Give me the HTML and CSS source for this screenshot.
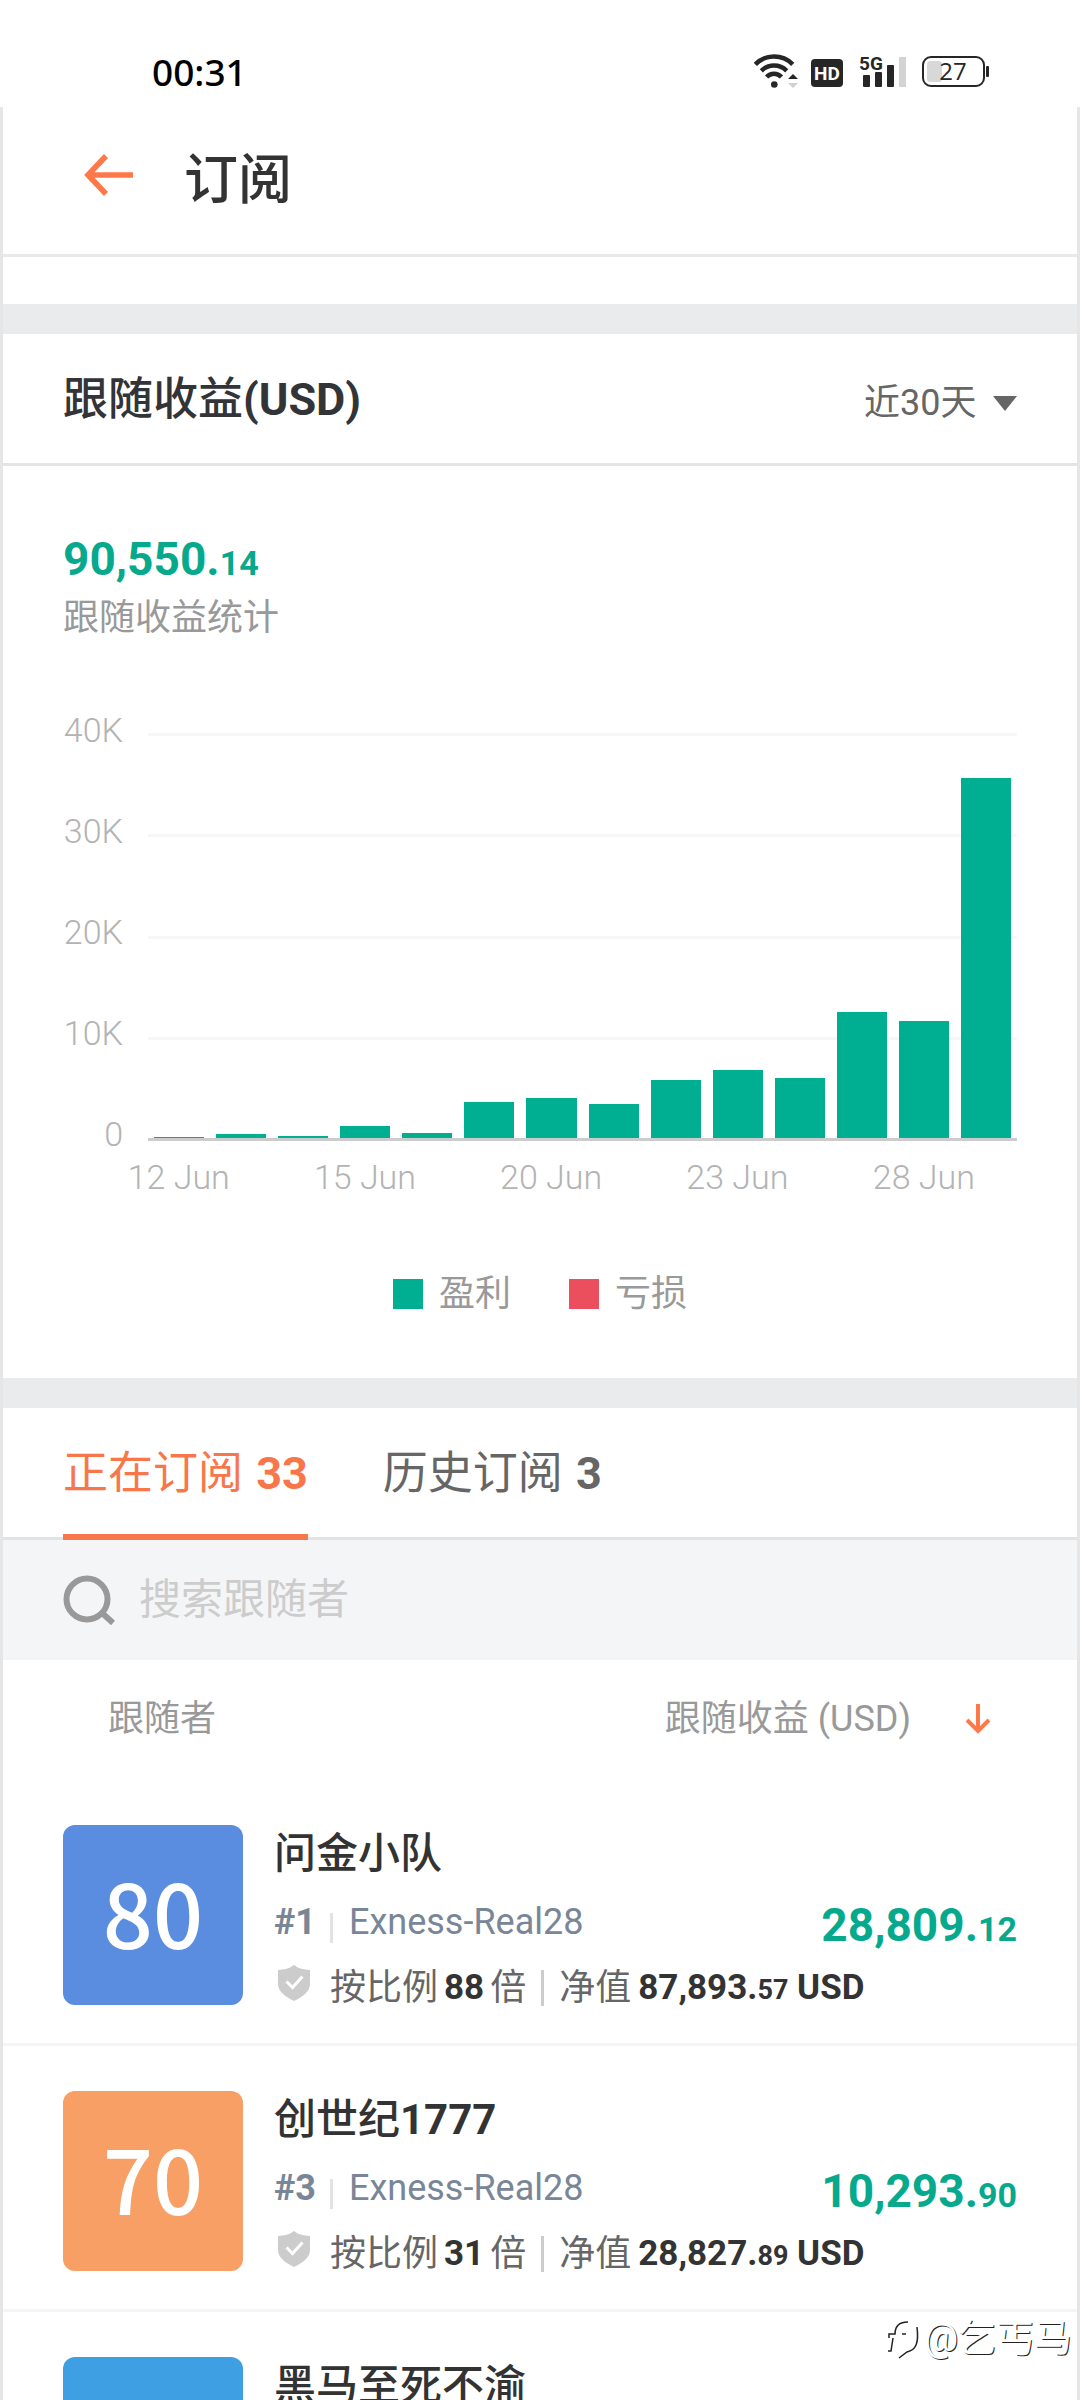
FILE: index.html
```html
<!DOCTYPE html>
<html lang="zh-CN">
<head>
<meta charset="utf-8">
<meta name="viewport" content="width=device-width, initial-scale=1">
<title>订阅</title>
<link rel="stylesheet" href="styles.css">
</head>
<body>
<div class="screen">
  <div class="status-bar">
    <span class="clock">00:31</span>
    <svg class="status-icons" viewBox="0 0 240 40" aria-hidden="true">
      <g fill="none" stroke="#262626" stroke-width="4.500">
        <path d="M5.3 14.3A26.5 26.5 0 0 1 42.7 14.3"/>
        <path d="M11.3 20.8A18 18 0 0 1 36.7 20.8"/>
        <path d="M16.6 27A10 10 0 0 1 31.4 27"/>
      </g>
      <circle cx="24.3" cy="34.5" r="3.3" fill="#262626"/>
      <path d="M38 29h10l-5-5z" fill="#262626"/>
      <path d="M38 33h10l-5 5z" fill="#d0d0d0"/>
      <rect x="61" y="9" width="32" height="28" rx="4" fill="#262626"/>
      <text class="icon-bold" x="77" y="30" font-size="19" fill="#fff">HD</text>
      <text class="icon-bold" x="121" y="20" font-size="19" fill="#262626">5G</text>
      <rect x="113" y="25" width="7" height="12" rx="1" fill="#262626"/>
      <rect x="125" y="22" width="7" height="15" rx="1" fill="#262626"/>
      <rect x="137" y="15" width="7" height="22" rx="1" fill="#262626"/>
      <rect x="149" y="7" width="7" height="30" rx="1" fill="#d3d3d3"/>
      <rect x="173" y="7" width="61" height="29" rx="8" fill="none" stroke="#262626" stroke-width="2"/>
      <rect x="177" y="11" width="15" height="21" rx="3" fill="#d8d8d8"/>
      <text class="icon-light" x="203" y="30" font-size="24" fill="#262626">27</text>
      <rect x="236" y="16" width="3" height="11" rx="1" fill="#262626"/>
    </svg>
  </div>

  <main class="app">
    <header class="app-header">
      <button class="back" type="button" aria-label="返回">
        <svg viewBox="0 0 50 42" width="50" height="42" fill="none" stroke="#ff7849" stroke-width="5.6"><path d="M49 21H4M22 2 4 21l18 19"/></svg>
      </button>
      <h1 class="app-title">订阅</h1>
    </header>
    <div class="spacer"></div>

    <section class="profit">
      <div class="profit-head">
        <h2 class="section-title">跟随收益<b>(USD)</b></h2>
        <div class="range">
          <select class="range-select" aria-label="时间范围"><option>近30天</option></select>
          <svg viewBox="0 0 24 15" width="24" height="15" fill="#666"><path d="M0 0h24L12 15z"/></svg>
        </div>
      </div>
      <div class="profit-body">
        <div class="amount">90,550.<small>14</small></div>
        <p class="amount-note">跟随收益统计</p>

        <div class="chart">
          <div class="y-axis"><span>40K</span><span>30K</span><span>20K</span><span>10K</span><span>0</span></div>
          <div class="plot">
            <div class="grid-lines"><i></i><i></i><i></i><i></i></div>
            <div class="bars">
              <i style="height:0.2%"></i>
              <i style="height:0.9%"></i>
              <i style="height:0.4%"></i>
              <i style="height:3%"></i>
              <i style="height:1.2%"></i>
              <i style="height:8.9%"></i>
              <i style="height:9.9%"></i>
              <i style="height:8.4%"></i>
              <i style="height:14.4%"></i>
              <i style="height:16.9%"></i>
              <i style="height:14.8%"></i>
              <i style="height:31%"></i>
              <i style="height:28.9%"></i>
              <i style="height:88.9%"></i>
            </div>
          </div>
          <div class="x-axis"><span>12 Jun</span><span>15 Jun</span><span>20 Jun</span><span>23 Jun</span><span>28 Jun</span></div>
        </div>

        <div class="legend">
          <span class="legend-item"><i class="swatch gain"></i>盈利</span>
          <span class="legend-item"><i class="swatch loss"></i>亏损</span>
        </div>
      </div>
    </section>

    <section class="followers">
      <nav class="tabs">
        <button class="tab active" type="button">正在订阅 <b>33</b></button>
        <button class="tab" type="button">历史订阅 <b>3</b></button>
      </nav>
      <label class="search">
        <svg viewBox="0 0 52 50" width="52" height="50" fill="none" stroke="#999" stroke-width="6"><circle cx="24" cy="24" r="20.5"/><path d="M38 37l12 11"/></svg>
        <input class="search-input" type="text" placeholder="搜索跟随者" aria-label="搜索跟随者">
      </label>
      <div class="list-head">
        <span>跟随者</span>
        <button class="sort" type="button">跟随收益 (USD)
          <svg viewBox="0 0 26 30" width="26" height="30" fill="none" stroke="#ff7849" stroke-width="4"><path d="M13 0v27M2 16l11 11 11-11"/></svg>
        </button>
      </div>
      <ul class="list">
        <li class="row">
          <div class="avatar blue">80</div>
          <div class="info">
            <div class="name">问金小队</div>
            <div class="account"><b class="rank">#1</b><i class="divider"></i><span>Exness-Real28</span><span class="amount">28,809.<small>12</small></span></div>
            <div class="terms">
              <svg class="shield" viewBox="0 0 32 36" width="32" height="36"><path d="M16 0c5 4 10 4.500 16 5v14c0 8-8 13-16 17C8 32 0 27 0 19V5c6-.5 11-1 16-5z" fill="#ccc"/><path d="M8.500 16.500l6 6 10-11" fill="none" stroke="#fff" stroke-width="3"/></svg>
              <span>按比例</span><b class="ratio">88</b><span>倍</span><i class="bar"></i><span>净值</span><b class="equity">87,893.<small>57</small> USD</b>
            </div>
          </div>
        </li>
        <li class="row">
          <div class="avatar orange">70</div>
          <div class="info">
            <div class="name">创世纪<b>1777</b></div>
            <div class="account"><b class="rank">#3</b><i class="divider"></i><span>Exness-Real28</span><span class="amount">10,293.<small>90</small></span></div>
            <div class="terms">
              <svg class="shield" viewBox="0 0 32 36" width="32" height="36"><path d="M16 0c5 4 10 4.500 16 5v14c0 8-8 13-16 17C8 32 0 27 0 19V5c6-.5 11-1 16-5z" fill="#ccc"/><path d="M8.500 16.500l6 6 10-11" fill="none" stroke="#fff" stroke-width="3"/></svg>
              <span>按比例</span><b class="ratio">31</b><span>倍</span><i class="bar"></i><span>净值</span><b class="equity">28,827.<small>89</small> USD</b>
            </div>
          </div>
        </li>
        <li class="row">
          <div class="avatar sky"></div>
          <div class="info">
            <div class="name">黑马至死不渝</div>
          </div>
        </li>
      </ul>
    </section>
  </main>

  <div class="watermark">
    <svg viewBox="0 0 36 42" width="36" height="42" fill="none" stroke="#222" stroke-width="1.500"><path d="M5 21V17h6C11 9 15 5 24 5M9 21 7 34H4M18 17h4M33 10c2 16-1 23-10 25l-8 6"/></svg>
    <span>@乞丐马</span>
  </div>
</div>
</body>
</html>
```
FILE: styles.css
```css
* { box-sizing: border-box; margin: 0; padding: 0; }

body {
  background: #fff;
  color: #333;
  font-family: Roboto, "Noto Sans CJK SC", sans-serif;
  font-size: 36px;
  line-height: 50px;
}

button, select, input {
  border: 0;
  background: none;
  font: inherit;
  color: inherit;
  appearance: none;
  outline: 0;
}

svg { display: block; flex: none; }
i { display: block; }
small { line-height: 1; }

.screen {
  position: relative;
  display: flex;
  flex-direction: column;
  height: 100vh;
  overflow: hidden;
}

/* Status bar */
.status-bar {
  flex: none;
  display: flex;
  justify-content: space-between;
  align-items: center;
  padding: 47px 90px 10px 152px;
  color: #000;
}
.clock { font-family: "Noto Sans", sans-serif; font-size: 37px; font-weight: 500; }
.status-icons { width: 240px; height: 40px; margin-bottom: 4px; }
.icon-bold { font-family: Roboto, sans-serif; font-weight: 700; text-anchor: middle; }
.icon-light { font-family: "Open Sans", sans-serif; text-anchor: middle; }

.app {
  flex: 1;
  min-height: 0;
  border: solid #e6e6e6;
  border-width: 0 3px;
}

/* Header */
.app-header {
  display: flex;
  align-items: center;
  gap: 50px;
  padding: 34px 81px 33px;
  border-bottom: 3px solid #e9e9e9;
}
.back { padding-bottom: 12px; }
.app-title { font-size: 54px; line-height: 80px; font-weight: 500; }
.spacer { height: 77px; border-bottom: 30px solid #eaebed; }

/* Profit */
.profit { border-bottom: 30px solid #eaebed; }
.profit-head {
  display: flex;
  justify-content: space-between;
  align-items: baseline;
  height: 132px;
  padding: 36px 60px 0;
  border-bottom: 3px solid #e5e5e5;
}
.section-title { font-size: 45px; line-height: 60px; font-weight: 500; color: #333438; }
.range { display: flex; align-items: center; gap: 16px; color: #666; }
.profit-body { padding: 66px 60px 59px; }
.amount { font-size: 46px; line-height: 54px; font-weight: 700; color: #07a98d; }
.amount small { font-size: 34px; }
.amount-note { height: 50px; margin-top: 7px; color: #999; }

.chart {
  display: grid;
  grid-template-columns: 60px minmax(0, 1fr);
  gap: 3px 25px;
  margin-top: 67px;
  font-size: 34px;
  line-height: 40px;
  font-weight: 300;
  color: #b3b3b3;
}
.y-axis {
  display: flex;
  flex-direction: column;
  justify-content: space-between;
  text-align: right;
}
.plot {
  display: grid;
  height: 408px;
  margin: 23px 0 13px;
  border-bottom: 3px solid #ccc;
}
.grid-lines, .bars { grid-area: 1 / 1; display: flex; }
.grid-lines { flex-direction: column; }
.grid-lines i { flex: 1; border-top: 3px solid #f7f7f7; }
.bars { align-items: flex-end; gap: 12px; padding: 0 6px; }
.bars i { flex: 1; background: #00ae92; }
.x-axis {
  grid-column: 2;
  display: grid;
  grid-template-columns: repeat(14, minmax(0, 1fr));
}
.x-axis span { grid-column: span 3; width: 33%; display: flex; justify-content: center; white-space: nowrap; }
.x-axis span:last-child { grid-column: span 2; width: 50%; }

.legend { display: flex; justify-content: center; gap: 58px; height: 50px; margin-top: 72px; color: #999; }
.legend-item { display: flex; align-items: center; gap: 16px; }
.swatch { width: 30px; height: 30px; }
.gain { background: #00ae92; }
.loss { background: #eb4e5c; }

/* Tabs and search */
.tabs {
  display: flex;
  gap: 75px;
  padding: 0 60px;
  box-shadow: inset 0 -3px #e3e3e4;
}
.tab {
  height: 132px;
  padding: 6px 0 0;
  border-bottom: 6px solid transparent;
  font-size: 45px;
  line-height: 54px;
  color: #666;
}
.tab b { margin-left: 2px; }
.tab.active { color: #f8774a; border-color: #f8774a; }
.search {
  display: flex;
  align-items: center;
  gap: 24px;
  height: 120px;
  padding: 0 60px;
  background: #f4f5f7;
}
.search-input { flex: 1; min-width: 0; font-size: 42px; line-height: 60px; }
.search-input::placeholder { color: #ccc; }

/* Follower list */
.list-head {
  display: flex;
  justify-content: space-between;
  height: 120px;
  padding: 34px 86px 36px 105px;
  color: #999;
}
.sort { display: flex; align-items: center; gap: 54px; }
.list { list-style: none; }
.row {
  display: flex;
  gap: 31px;
  height: 266px;
  padding: 45px 60px 0;
  border-bottom: 3px solid #f4f5f5;
}
.avatar {
  flex: none;
  width: 180px;
  height: 180px;
  border-radius: 12px;
  font-family: "Noto Sans CJK SC", sans-serif;
  font-size: 88px;
  font-weight: 500;
  line-height: 172px;
  text-align: center;
  color: #fff;
}
.blue { background: #5a8ce0; }
.orange { background: #f79f64; }
.sky { background: #3e9fe3; }
.info { flex: 1; min-width: 0; display: flex; flex-direction: column; gap: 16px; padding-top: 2px; }
.name { height: 54px; font-size: 42px; line-height: 54px; font-weight: 500; }
.account { display: flex; align-items: center; height: 50px; color: #788698; }
.rank { width: 56px; }
.divider { width: 3px; height: 30px; margin: 12px 16px 0 0; background: #e3e3e3; }
.account .amount { margin-left: auto; padding-top: 5px; }
.terms { display: flex; align-items: center; height: 50px; color: #666; white-space: nowrap; }
.shield { margin: 0 20px 10px 4px; }
.ratio, .equity { font-size: 35px; color: #333; }
.ratio { margin: 0 6px; }
.bar { width: 3px; height: 36px; margin: 0 15px; background: #ccc; }
.equity { margin-left: 7px; }
.equity small { font-size: 27px; }

/* Floating author mark */
.watermark {
  position: absolute;
  right: 8px;
  bottom: 37px;
  display: flex;
  align-items: center;
  gap: 4px;
  font-size: 38px;
  color: #fff;
  text-shadow: 1px 1px 0 #222;
}
```
